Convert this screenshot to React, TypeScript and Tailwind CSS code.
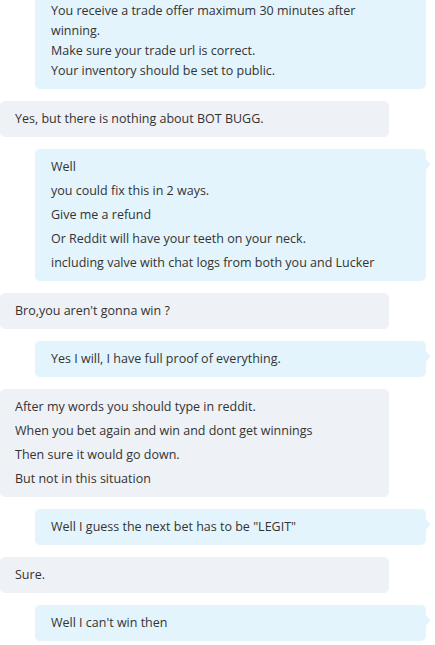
const Tail = () => (
  <svg
    className="absolute right-[-5px] top-[9px]"
    width="6"
    height="13"
    viewBox="0 0 6 13"
  >
    <path d="M0 0 L4.6 5.4 Q5.4 6.5 4.6 7.6 L0 13 Z" fill="#e3f4fc" />
  </svg>
);

const Mine = ({ lines, first }: { lines: string[]; first?: boolean }) => (
  <div
    className={
      first
        ? "relative ml-[35px] w-[391px] rounded-[5px] bg-[#e3f4fc] pl-[16px] pt-[8px] pb-[8px] leading-[20px] -mt-[7px]"
        : "relative ml-[35px] w-[391px] rounded-[5px] bg-[#e3f4fc] pl-[16px] py-[6px] leading-[24px]"
    }
  >
    {lines.map((l, i) => (
      <div key={i} className="whitespace-nowrap">
        {l}
      </div>
    ))}
    {!first && <Tail />}
  </div>
);

const Theirs = ({ lines }: { lines: string[] }) => (
  <div className="w-[389px] rounded-[5px] bg-[#eef1f6] pl-[15px] py-[6px] leading-[24px]">
    {lines.map((l, i) => (
      <div key={i} className="whitespace-nowrap">
        {l}
      </div>
    ))}
  </div>
);

export default function App() {
  return (
    <div className="h-[645px] w-[435px] overflow-hidden bg-white font-['Open_Sans',sans-serif] text-[12.5px] text-[#333]">
      <div className="flex flex-col gap-[12px]">
        <Mine
          first
          lines={[
            "You receive a trade offer maximum 30 minutes after",
            "winning.",
            "Make sure your trade url is correct.",
            "Your inventory should be set to public.",
          ]}
        />
        <Theirs lines={["Yes, but there is nothing about BOT BUGG."]} />
        <Mine
          lines={[
            "Well",
            "you could fix this in 2 ways.",
            "Give me a refund",
            "Or Reddit will have your teeth on your neck.",
            "including valve with chat logs from both you and Lucker",
          ]}
        />
        <Theirs lines={["Bro,you aren't gonna win ?"]} />
        <Mine lines={["Yes I will, I have full proof of everything."]} />
        <Theirs
          lines={[
            "After my words you should type in reddit.",
            "When you bet again and win and dont get winnings",
            "Then sure it would go down.",
            "But not in this situation",
          ]}
        />
        <Mine lines={['Well I guess the next bet has to be "LEGIT"']} />
        <Theirs lines={["Sure."]} />
        <Mine lines={["Well I can't win then"]} />
      </div>
    </div>
  );
}
